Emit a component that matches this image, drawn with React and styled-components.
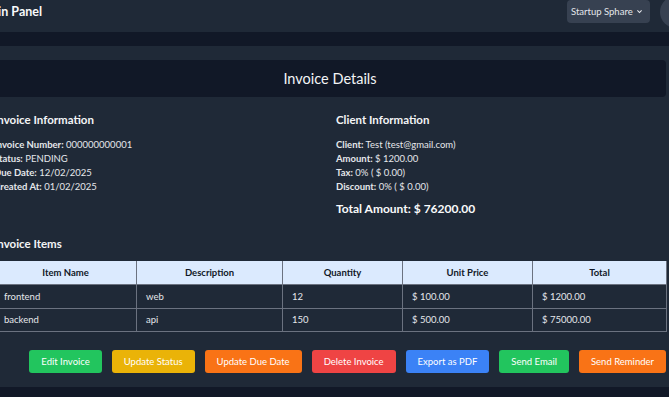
import styled, { createGlobalStyle } from "styled-components";

const GlobalStyle = createGlobalStyle`
  html, body {
    margin: 0;
    padding: 0;
    background: #111827;
    overflow: hidden;
  }
  body {
    font-family: Lato, "Noto Sans", sans-serif;
    color: #e5e7eb;
  }
`

const Page = styled.div`
  width: 756px;
  margin-left: -48px;
  margin-top: -9px;
`

const TopBar = styled.header`
  height: 41px;
  padding: 0 16px;
  background: #1f2937;
  display: flex;
  align-items: center;
  justify-content: space-between;
  box-sizing: border-box;
`

const Brand = styled.div`
  margin-left: 4px;
  font-size: 12.5px;
  font-weight: 700;
  color: #f9fafb;
`

const TopRight = styled.div`
  display: flex;
  align-items: center;
  gap: 10px;
`

const OrgSelect = styled.button`
  height: 23px;
  width: 83px;
  padding: 0 7px 0 4px;
  display: flex;
  align-items: center;
  justify-content: space-between;
  background: #374151;
  border: none;
  border-radius: 4px;
  color: #e5e7eb;
  font-family: inherit;
  font-size: 9.5px;
`

const Avatar = styled.div`
  width: 32px;
  height: 32px;
  border-radius: 50%;
  background: #374151;
`

const Main = styled.main`
  padding: 14px 28px 0;
`

const Card = styled.section`
  background: #1f2937;
  border-radius: 6px;
  padding: 14px;
`

const CardHeader = styled.div`
  height: 37px;
  background: #111827;
  border-radius: 4px;
  display: flex;
  align-items: center;
  justify-content: center;
  font-size: 14.5px;
  color: #f3f4f6;
`

const InfoGrid = styled.div`
  display: grid;
  grid-template-columns: 1fr 1fr;
  column-gap: 12px;
  margin-top: 16px;
`

const SectionTitle = styled.h3`
  margin: 0 0 12px;
  font-size: 11.5px;
  font-weight: 700;
  color: #f3f4f6;
`

const Line = styled.p`
  margin: 0;
  font-size: 9.5px;
  line-height: 14px;
  color: #e5e7eb;
  b {
    font-weight: 700;
  }
`

const Total = styled.div`
  margin-top: 7px;
  font-size: 12px;
  font-weight: 700;
  color: #f9fafb;
`

const ItemsTitle = styled(SectionTitle)`
  margin: 21px 0 11px;
`

const Table = styled.table`
  width: 100%;
  border-collapse: collapse;
  table-layout: fixed;
  font-size: 9.5px;
`

const Th = styled.th`
  height: 23px;
  padding: 0 8px;
  background: #dbeafe;
  color: #111827;
  font-weight: 700;
  border: 1px solid #6b7280;
  border-top: none;
`

const Td = styled.td`
  height: 22.5px;
  padding: 0 9px;
  color: #e5e7eb;
  border: 1px solid #6b7280;
`

const Actions = styled.div`
  display: flex;
  justify-content: flex-end;
  gap: 10px;
  margin-top: 18px;
`

const ActionButton = styled.button`
  height: 23px;
  padding: 0 12px;
  border: none;
  border-radius: 3px;
  background: ${(p) => p.$color};
  color: #ffffff;
  font-family: inherit;
  font-size: 9.5px;
  white-space: nowrap;
`

const items = [
  { name: "frontend", description: "web", qty: "12", price: "$ 100.00", total: "$ 1200.00" },
  { name: "backend", description: "api", qty: "150", price: "$ 500.00", total: "$ 75000.00" },
]

const actions = [
  { label: "Edit Invoice", color: "#22c55e" },
  { label: "Update Status", color: "#eab308" },
  { label: "Update Due Date", color: "#f97316" },
  { label: "Delete Invoice", color: "#ef4444" },
  { label: "Export as PDF", color: "#3b82f6" },
  { label: "Send Email", color: "#22c55e" },
  { label: "Send Reminder", color: "#f97316" },
]

const App = () => {
  return (
    <>
      <GlobalStyle />
      <Page>
        <TopBar>
          <Brand>Admin Panel</Brand>
          <TopRight>
            <OrgSelect>
              Startup Sphare
              <svg width="7" height="7" viewBox="0 0 10 10" fill="none" stroke="#e5e7eb" strokeWidth="1.6">
                <path d="M2 3.5 L5 6.5 L8 3.5" />
              </svg>
            </OrgSelect>
            <Avatar />
          </TopRight>
        </TopBar>

        <Main>
          <Card>
            <CardHeader>Invoice Details</CardHeader>

            <InfoGrid>
              <div>
                <SectionTitle>Invoice Information</SectionTitle>
                <Line><b>Invoice Number:</b> 000000000001</Line>
                <Line><b>Status:</b> PENDING</Line>
                <Line><b>Due Date:</b> 12/02/2025</Line>
                <Line><b>Created At:</b> 01/02/2025</Line>
              </div>
              <div>
                <SectionTitle>Client Information</SectionTitle>
                <Line><b>Client:</b> Test (test@gmail.com)</Line>
                <Line><b>Amount:</b> $ 1200.00</Line>
                <Line><b>Tax:</b> 0% ( $ 0.00)</Line>
                <Line><b>Discount:</b> 0% ( $ 0.00)</Line>
                <Total>Total Amount: $ 76200.00</Total>
              </div>
            </InfoGrid>

            <ItemsTitle>Invoice Items</ItemsTitle>
            <Table>
              <colgroup>
                <col style={{ width: "142px" }} />
                <col style={{ width: "146px" }} />
                <col style={{ width: "120px" }} />
                <col style={{ width: "130px" }} />
                <col style={{ width: "134px" }} />
              </colgroup>
              <thead>
                <tr>
                  <Th>Item Name</Th>
                  <Th>Description</Th>
                  <Th>Quantity</Th>
                  <Th>Unit Price</Th>
                  <Th>Total</Th>
                </tr>
              </thead>
              <tbody>
                {items.map((item) => (
                  <tr key={item.name}>
                    <Td>{item.name}</Td>
                    <Td>{item.description}</Td>
                    <Td>{item.qty}</Td>
                    <Td>{item.price}</Td>
                    <Td>{item.total}</Td>
                  </tr>
                ))}
              </tbody>
            </Table>

            <Actions>
              {actions.map((a) => (
                <ActionButton key={a.label} $color={a.color}>{a.label}</ActionButton>
              ))}
            </Actions>
          </Card>
        </Main>
      </Page>
    </>
  )
}

export default App
